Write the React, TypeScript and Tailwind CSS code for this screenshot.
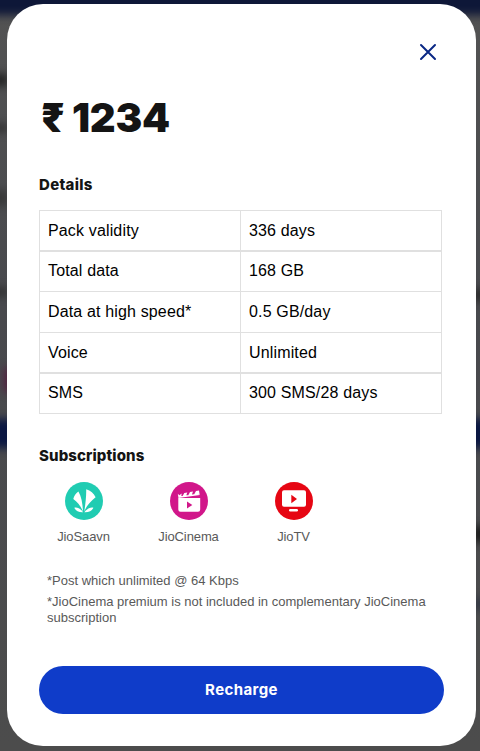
import React from "react";

interface Detail {
  label: string;
  value: string;
  rowClass: string;
  cellClass?: string;
}

const details: Detail[] = [
  { label: "Pack validity", value: "336 days", rowClass: "h-[41px] border-b-2" },
  { label: "Total data", value: "168 GB", rowClass: "h-10 border-b", cellClass: "pb-px" },
  { label: "Data at high speed*", value: "0.5 GB/day", rowClass: "h-[41px] border-b" },
  { label: "Voice", value: "Unlimited", rowClass: "h-[41px] border-b-2" },
  { label: "SMS", value: "300 SMS/28 days", rowClass: "h-[39px]", cellClass: "pb-px" },
];

const SaavnIcon = () => (
  <svg className="size-[38px]" viewBox="0 0 38 38">
    <circle cx="19" cy="19" r="19" fill="#20ccb2" />
    <g fill="#fff">
      <path d="M21.200 7.200C25.600 8.400 28.800 11.200 30.600 15.200C26 18.800 21.500 23.500 19.300 29.500C20.400 22 21.400 14 21.200 7.200Z" />
      <path d="M13.400 9.600C10.800 11.400 9 14 8.300 17C12.500 20 15.800 24 18 29.500C17.700 22.500 16.600 15 13.400 9.600Z" />
      <path d="M9.300 25.700C13 25 16 27 18 30.300C14 30.500 10.800 29 9.300 25.700Z" />
      <path d="M28.400 25.700C24.700 25 21.700 27 19.400 30.300C23.700 30.500 26.900 29 28.400 25.700Z" />
    </g>
  </svg>
);

const CinemaIcon = () => (
  <svg className="size-[38px]" viewBox="0 0 38 38">
    <circle cx="19" cy="19" r="19" fill="#d1178a" />
    <path d="M8.300 16H30.200V27.500A2.200 2.200 0 0 1 28 29.700H10.500A2.200 2.200 0 0 1 8.300 27.500Z" fill="#fff" />
    <path
      d="M7.800 11.800L9.300 13.300L11.700 11.400L11.300 13.900L29.300 11.400L29.800 13L8.500 15.900ZM14.300 10.900L17.300 10.500L15.900 14.200L12.200 14.700ZM20 10L23 9.600L21.600 13.400L17.900 13.900ZM26 9L29 8.600L29.600 12.300L23.800 13Z"
      fill="#fff"
    />
    <path d="M17 19.600V26.400L22.300 23Z" fill="#d1178a" />
  </svg>
);

const TvIcon = () => (
  <svg className="size-[38px]" viewBox="0 0 38 38">
    <circle cx="19" cy="19" r="19" fill="#e60613" />
    <rect x="7" y="8.200" width="24" height="16.600" rx="2" fill="#fff" />
    <rect x="14" y="27" width="9" height="2.400" rx="1.200" fill="#fff" />
    <path d="M16.300 12.800V21.200L22 17Z" fill="#e60613" />
  </svg>
);

const subscriptions = [
  { name: "JioSaavn", icon: <SaavnIcon /> },
  { name: "JioCinema", icon: <CinemaIcon /> },
  { name: "JioTV", icon: <TvIcon /> },
];

const Backdrop = () => (
  <div className="absolute inset-0 overflow-hidden bg-linear-to-b from-[#535353] via-[#48494d] via-40% to-[#4c4c4c]">
    <div className="absolute -top-3 -left-4 h-[27px] w-[520px] bg-[#0e1738] blur-[4px]" />
    <div className="absolute top-[419px] -left-4 h-[29px] w-[520px] bg-[#0b1742] blur-[4px]" />
    <div className="absolute top-[74px] -left-4 h-3 w-6 bg-[#222222] blur-[4px]" />
    <div className="absolute top-[124px] -left-4 h-2 w-6 bg-[#303030] blur-[4px]" />
    <div className="absolute top-[190px] -left-4 h-4 w-6 bg-[#383838] blur-[4px]" />
    <div className="absolute top-[288px] -left-4 h-2 w-6 bg-[#2e2e2e] blur-[4px]" />
    <div className="absolute top-[368px] left-1 h-6 w-4 bg-[#53203f] blur-[4px]" />
    <div className="absolute top-[289px] -right-4 h-3 w-6 bg-[#2b2b2b] blur-[4px]" />
    <div className="absolute top-[526px] -right-4 h-4 w-6 bg-[#1d1d1d] blur-[4px]" />
    <div className="absolute top-[598px] -right-4 h-3 w-6 bg-[#343844] blur-[4px]" />
  </div>
);

const DetailsTable = () => (
  <div className="mt-[13px] w-[403px] border border-[#e0e0e0] font-['Liberation_Sans',sans-serif] text-[16px] leading-6 tracking-[0.15px] text-black">
    {details.map((item) => (
      <div key={item.label} className={`grid grid-cols-[201px_200px] border-[#e0e0e0] ${item.rowClass}`}>
        <div className={`flex items-center border-r border-[#e0e0e0] pl-2 ${item.cellClass ?? ""}`}>{item.label}</div>
        <div className={`flex items-center pl-2 ${item.cellClass ?? ""}`}>{item.value}</div>
      </div>
    ))}
  </div>
);

const App = () => {
  return (
    <div className="relative h-[751px] w-[480px] overflow-hidden pt-1 pl-[7px] font-['Inter','Liberation_Sans',sans-serif]">
      <Backdrop />
      <div className="relative flex h-[742px] w-[469px] flex-col rounded-[36px] bg-white px-8 pt-9 pb-8">
        <button className="mr-1 flex size-6 items-center justify-center self-end" aria-label="Close">
          <svg className="size-6" viewBox="0 0 24 24" fill="none" stroke="#0a2885" strokeWidth="2" strokeLinecap="round">
            <path d="M5 5L19 19M19 5L5 19" />
          </svg>
        </button>
        <h1 className="mt-[30px] flex h-12 items-center gap-[7px] pl-[2px] text-[40px] leading-[48px] font-black text-[#141414]">
          <span>₹</span>
          <span className="tracking-[-0.2px]">1234</span>
        </h1>
        <h2 className="mt-[31px] h-6 text-[15px] leading-6 font-extrabold tracking-[0.3px] text-[#141414]">Details</h2>
        <DetailsTable />
        <h2 className="mt-[30px] h-6 text-[15px] leading-6 font-extrabold tracking-[0.1px] text-[#141414]">Subscriptions</h2>
        <div className="mt-[14px] -ml-2 flex">
          {subscriptions.map((item) => (
            <div key={item.name} className="flex w-[105px] flex-col items-center">
              {item.icon}
              <span className="mt-[9px] font-['Liberation_Sans',sans-serif] text-[13px] leading-4 tracking-[-0.1px] text-[#595959]">
                {item.name}
              </span>
            </div>
          ))}
        </div>
        <div className="mt-7 pl-2 font-['Liberation_Sans',sans-serif] text-[13px] leading-4 text-[#595959]">
          <p>*Post which unlimited @ 64 Kbps</p>
          <p className="mt-[5px]">*JioCinema premium is not included in complementary JioCinema subscription</p>
        </div>
        <button className="mt-auto h-12 w-full shrink-0 rounded-full bg-[#0f3cc9] text-[15px] leading-6 font-bold tracking-[0.4px] text-white">
          Recharge
        </button>
      </div>
    </div>
  );
};

export default App;
